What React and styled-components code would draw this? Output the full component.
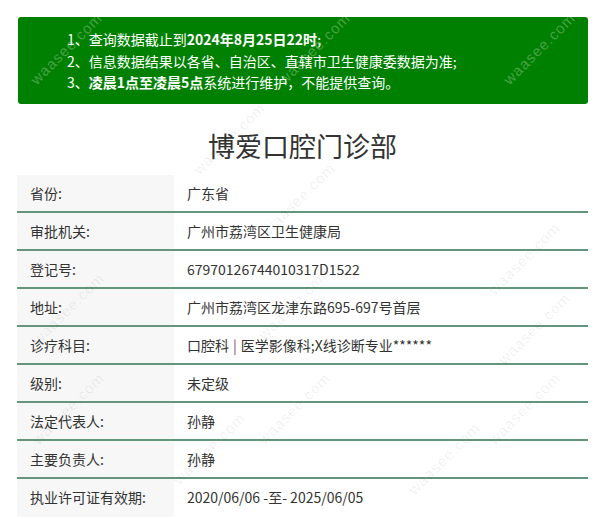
import React from "react";
import styled, { createGlobalStyle } from "styled-components";

const Global = createGlobalStyle`
  html, body { margin: 0; padding: 0; background: #fff; }
  body { font-family: "Noto Sans CJK SC", "Noto Sans", sans-serif; color: #333; }
`;

const Page = styled.div`
  position: relative;
  width: 571px;
  margin: 0 0 0 17px;
  padding-top: 17px;
`;

const Notice = styled.ul`
  list-style: none;
  margin: 0 0 0 1px;
  padding: 12px 10px 10px 49px;
  background: #008000;
  border-radius: 3px;
  color: #fff;
  font-size: 14px;
  line-height: 21.5px;
`;

const NoticeItem = styled.li`
  white-space: nowrap;
`;

const Strong = styled.b`
  font-weight: 700;
`;

const Title = styled.h1`
  margin: 22px 0 9px;
  text-align: center;
  font-size: 27px;
  line-height: 40px;
  font-weight: 400;
  color: #333;
`;

const Table = styled.div`
  display: grid;
  grid-template-columns: 157px 1fr;
`;

const Row = styled.div`
  display: contents;
`;

const Cell = styled.div`
  height: 36px;
  display: flex;
  align-items: center;
  font-size: 14px;
  color: #333;
  border-bottom: 2px solid ${(p) => (p.$last ? "transparent" : "#64967c")};
  padding-left: 13px;
  background: ${(p) => (p.$label ? "#f7f7f7" : "#fff")};
  white-space: nowrap;
`;

const Sep = styled.span`
  color: #8c3b74;
  margin: 0 4px;
`;

const Mark = styled.span`
  position: absolute;
  left: ${(p) => p.$x}px;
  top: ${(p) => p.$y}px;
  transform: rotate(-45deg);
  font-family: "Liberation Sans", sans-serif;
  font-size: 15px;
  letter-spacing: 1px;
  color: ${(p) => (p.$light ? "rgba(255,255,255,0.28)" : "rgba(0,0,0,0.07)")};
  pointer-events: none;
  white-space: nowrap;
`;

const rows = [
  ["省份:", "广东省"],
  ["审批机关:", "广州市荔湾区卫生健康局"],
  ["登记号:", "67970126744010317D1522"],
  ["地址:", "广州市荔湾区龙津东路695-697号首层"],
  [
    "诊疗科目:",
    <>
      口腔科<Sep>|</Sep>医学影像科;X线诊断专业******
    </>,
  ],
  ["级别:", "未定级"],
  ["法定代表人:", "孙静"],
  ["主要负责人:", "孙静"],
  ["执业许可证有效期:", "2020/06/06 -至- 2025/06/05"],
];

const marks = [
  [2, 40, true],
  [250, 40, true],
  [475, 40, true],
  [165, 130, false],
  [235, 190, false],
  [460, 250, false],
  [4, 300, false],
  [230, 295, false],
  [470, 320, false],
  [4, 400, false],
  [230, 400, false],
  [460, 400, false],
  [145, 440, false],
  [380, 450, false],
];

export default function App() {
  return (
    <>
      <Global />
      <Page>
        <Notice>
          <NoticeItem>
            1、查询数据截止到<Strong>2024年8月25日22时</Strong>;
          </NoticeItem>
          <NoticeItem>2、信息数据结果以各省、自治区、直辖市卫生健康委数据为准;</NoticeItem>
          <NoticeItem>
            3、<Strong>凌晨1点至凌晨5点</Strong>系统进行维护，不能提供查询。
          </NoticeItem>
        </Notice>
        <Title>博爱口腔门诊部</Title>
        <Table>
          {rows.map(([k, v], i) => (
            <Row key={i}>
              <Cell $label $last={i === rows.length - 1}>{k}</Cell>
              <Cell $last={i === rows.length - 1}>{v}</Cell>
            </Row>
          ))}
        </Table>
        {marks.map(([x, y, light], i) => (
          <Mark key={i} $x={x} $y={y} $light={light}>
            waasee.com
          </Mark>
        ))}
      </Page>
    </>
  );
}
